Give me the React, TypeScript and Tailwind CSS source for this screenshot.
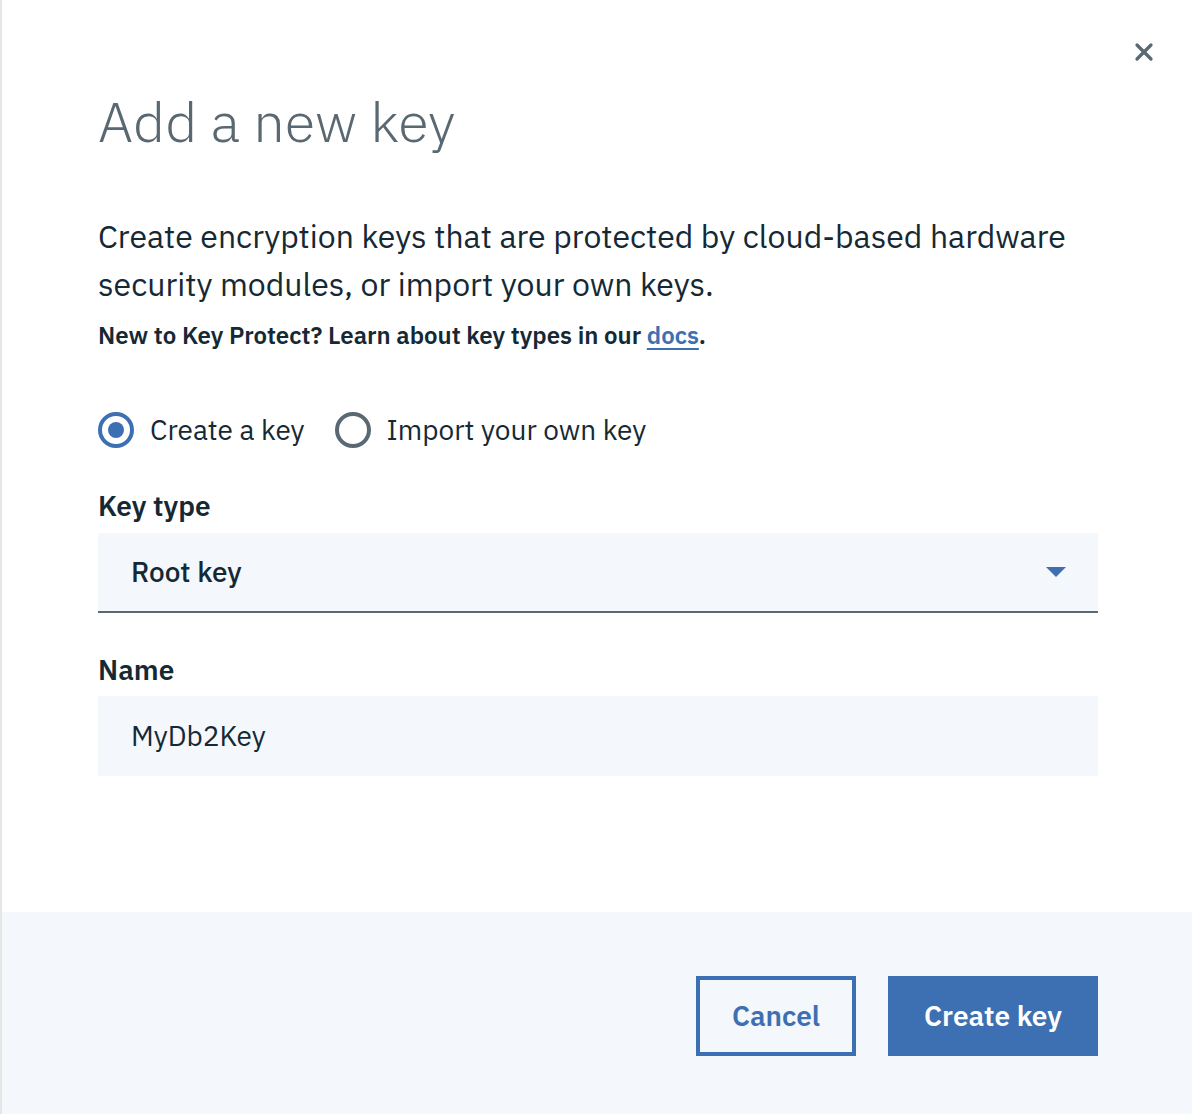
import { X } from "lucide-react"

const font = { fontFamily: '"IBM Plex Sans", "Noto Sans", "Liberation Sans", sans-serif' }

function Radio({ checked, label }: { checked?: boolean; label: string }) {
  return (
    <label className="flex items-center gap-[16px]">
      <span
        className={`flex h-[36px] w-[36px] items-center justify-center rounded-full border-[4px] ${
          checked ? "border-[#3d70b2]" : "border-[#5a6872]"
        }`}
      >
        {checked && <span className="h-[16px] w-[16px] rounded-full bg-[#3d70b2]" />}
      </span>
      <span className="text-[28px] text-[#152935]">{label}</span>
    </label>
  )
}

export default function App() {
  return (
    <div className="flex h-[1114px] w-full bg-white" style={font}>
      <div className="w-[2px] shrink-0 bg-[#e6e6e6]" />
      <div className="flex flex-1 flex-col">
        <div className="relative flex-1 pl-[96px] pr-[94px]">
          <button className="absolute right-[34px] top-[38px] text-[#5a6872]">
            <X size={28} strokeWidth={2.8} />
          </button>
          <h1 className="mt-[81px] text-[56px] font-light leading-[80px] text-[#5a6872]">Add a new key</h1>
          <p className="mt-[51px] text-[32px] leading-[48px] text-[#152935]">
            Create encryption keys that are protected by cloud-based hardware security modules, or import your own
            keys.
          </p>
          <p className="mt-[12px] text-[24px] font-semibold leading-[30px] text-[#152935]">
            New to Key Protect? Learn about key types in our{" "}
            <a className="text-[#3d70b2] underline underline-offset-4">docs</a>.
          </p>
          <div className="mt-[59px] flex items-center gap-[30px]">
            <Radio checked label="Create a key" />
            <Radio label="Import your own key" />
          </div>
          <div className="mt-[39px] text-[28px] font-semibold leading-[32px] text-[#152935]">Key type</div>
          <div className="mt-[11px] flex h-[80px] items-center justify-between border-b-[2px] border-[#5a6872] bg-[#f4f7fb] pl-[33px] pr-[32px]">
            <span className="text-[28px] font-medium text-[#152935]">Root key</span>
            <svg width="20" height="10" viewBox="0 0 20 10">
              <path d="M0 0 H20 L10 10 Z" fill="#3d70b2" />
            </svg>
          </div>
          <div className="mt-[41px] text-[28px] font-semibold leading-[32px] text-[#152935]">Name</div>
          <div className="mt-[10px] flex h-[80px] items-center bg-[#f4f7fb] pl-[33px]">
            <span className="text-[28px] text-[#152935]">MyDb2Key</span>
          </div>
        </div>
        <div className="flex h-[202px] shrink-0 items-start justify-end gap-[32px] bg-[#f4f7fb] pr-[94px] pt-[64px]">
          <button className="flex h-[80px] w-[160px] items-center justify-center border-[4px] border-[#3d70b2] text-[28px] font-semibold text-[#3d70b2]">
            Cancel
          </button>
          <button className="flex h-[80px] w-[210px] items-center justify-center bg-[#3d70b2] text-[28px] font-semibold text-white">
            Create key
          </button>
        </div>
      </div>
    </div>
  )
}
